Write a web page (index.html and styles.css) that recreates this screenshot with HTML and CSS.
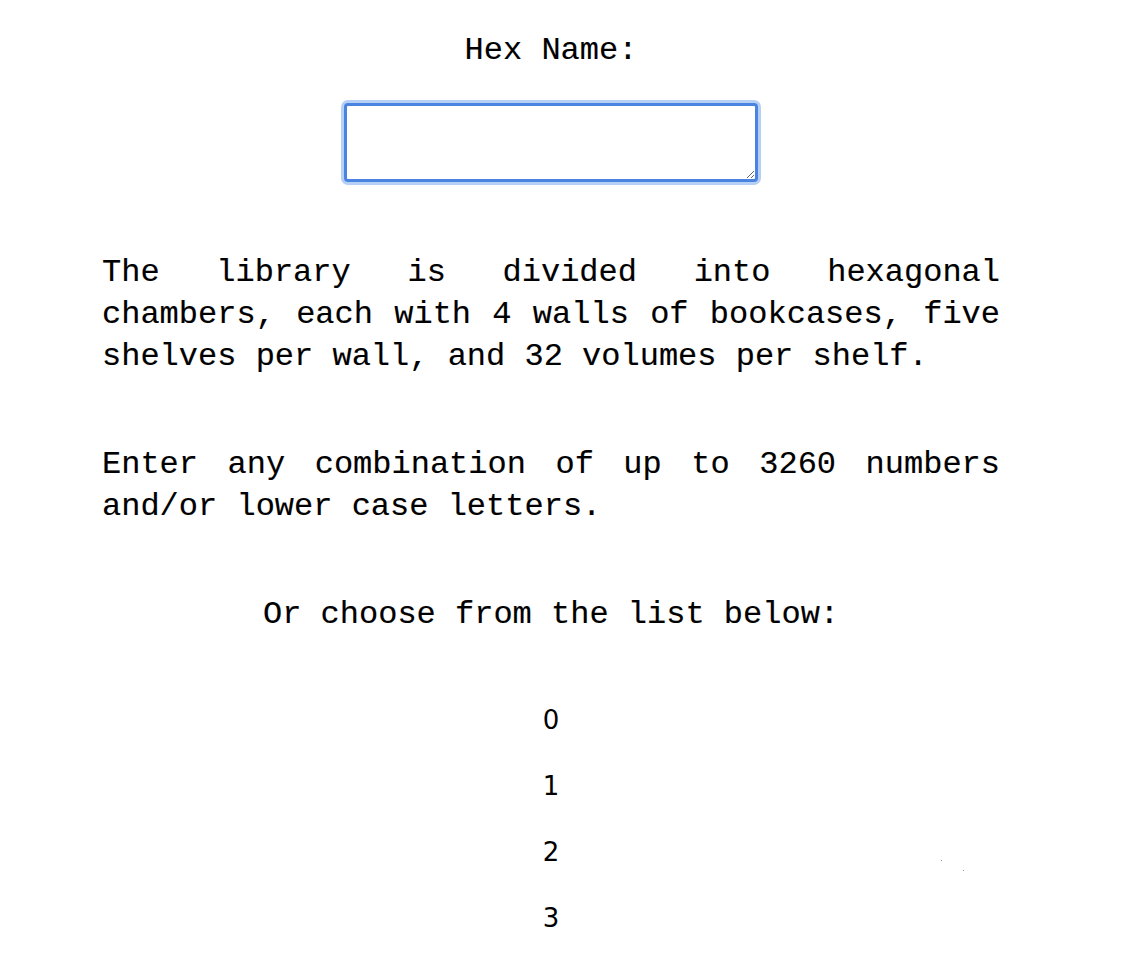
FILE: index.html
```html
<!DOCTYPE html>
<html>
<head>
<meta charset="utf-8">
<link rel="stylesheet" href="styles.css">
</head>
<body>
<div class="page">
  <p class="title">Hex Name:</p>
  <div class="field"><textarea class="hexname"></textarea></div>
  <p class="para">The library is divided into hexagonal chambers, each with 4 walls of bookcases, five shelves per wall, and 32 volumes per shelf.</p>
  <p class="para">Enter any combination of up to 3260 numbers and/or lower case letters.</p>
  <p class="choose">Or choose from the list below:</p>
  <ul class="list">
    <li>0</li>
    <li>1</li>
    <li>2</li>
    <li>3</li>
    <li>4</li>
    <li>5</li>
  </ul>
</div>
<span class="speck s1"></span>
<span class="speck s2"></span>
</body>
</html>
```
FILE: styles.css
```css
html, body {
  margin: 0;
  padding: 0;
  background: #fff;
  overflow: hidden;
}
body {
  position: relative;
  height: 972px;
}
.page {
  width: 898px;
  margin-left: 102px;
  padding-top: 30px;
  font-family: "Courier New", Courier, "Nimbus Mono PS", "Liberation Mono", monospace;
  font-size: 32px;
  line-height: 42px;
  color: #000;
  -webkit-text-stroke: 0.15px #000;
}
.title {
  margin: 0;
  text-align: center;
}
.field {
  display: flex;
  justify-content: center;
  margin-top: 31px;
}
.hexname {
  width: 406px;
  height: 71px;
  box-sizing: content-box;
  border: 3px solid #4a84e0;
  border-radius: 4px;
  box-shadow: 0 0 0 3px #b6cff5;
  outline: none;
  padding: 1px;
  resize: both;
  margin: 0;
  background: #fff;
}
.para {
  margin: 70px 0 0;
  text-align: justify;
}
.para + .para {
  margin-top: 66px;
}
.choose {
  margin: 66px 0 0;
  text-align: center;
}
.list {
  list-style: none;
  margin: 51px 0 0;
  padding: 0;
  font-family: "DejaVu Sans", "Noto Sans", sans-serif;
  font-size: 26px;
  line-height: 66px;
  text-align: center;
  -webkit-text-stroke: 0;
}
.speck {
  position: absolute;
  width: 1px;
  height: 1px;
  background: #9a9a9a;
}
.s1 { left: 941px; top: 860px; }
.s2 { left: 963px; top: 870px; }
```
